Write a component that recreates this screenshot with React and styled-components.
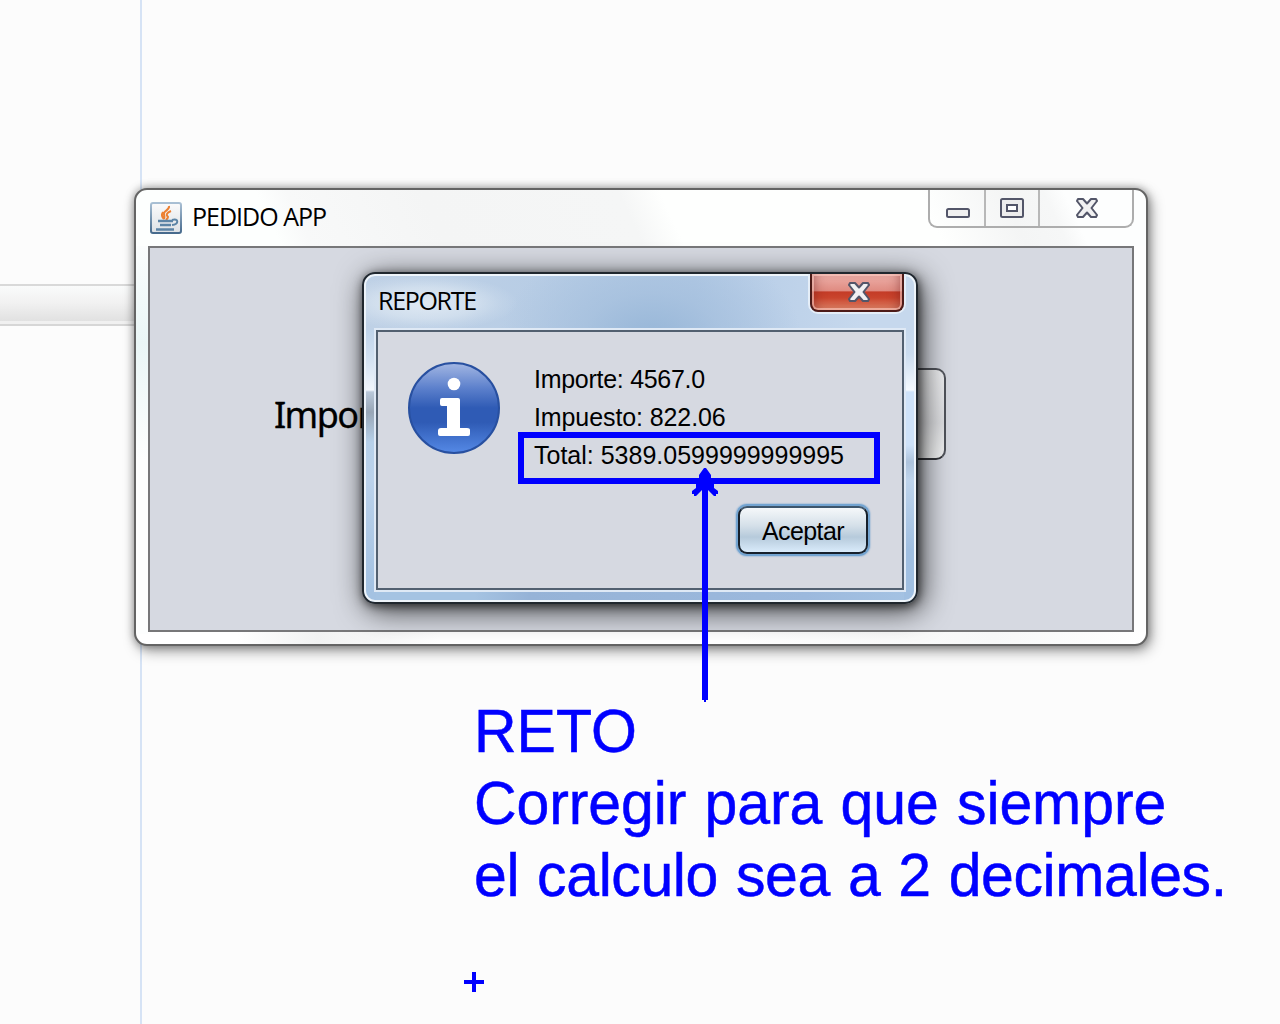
import React from "react";
import styled, { createGlobalStyle } from "styled-components";

const ink = "#0000ff";

const GlobalStyle = createGlobalStyle`
  * { box-sizing: border-box; }
  html, body { margin: 0; padding: 0; background: #fcfcfc; }
  body { overflow: hidden; font-family: "Liberation Sans", Arial, sans-serif; color: #000; }
  svg { display: block; }
`;

const Desktop = styled.main`
  position: relative;
  display: flex;
  width: 1280px;
  height: 1024px;
  overflow: hidden;
  background: #fcfcfc;
`;

const Gutter = styled.aside`
  width: 142px;
  padding-top: 284px;
  border-right: 2px solid #d6e3f5;
`;

const GutterBar = styled.div`
  height: 42px;
  border-top: 2px solid #d9d9d9;
  border-bottom: 2px solid #d6d6d6;
  background: linear-gradient(#fafbfb, #f1f1f1 45%, #e1e1e1 92%, #f0f0f0 93%);
`;

const AppWindow = styled.section`
  position: absolute;
  left: 134px;
  top: 188px;
  width: 1014px;
  height: 458px;
  padding: 0 12px 12px;
  border: 2px solid #646464;
  border-radius: 13px;
  background:
    linear-gradient(#fbfdfd, #eaf6f6 25%, #fdfefe 55%) left 0 top 56px / 12px 388px no-repeat,
    linear-gradient(90deg, #fff 10%, #f1f2f2 18%, #fff 30%, #fff 60%, #f7f8f8 85%, #fff) left 0 bottom 0 / 100% 12px no-repeat,
    linear-gradient(65deg, #fdfffe 14%, #f8f9f9 17%, #f4f5f5 30%, #f5f6f6 49%, #fefffe 53%, #fefffe 78%, #f4f5f5 86%, #f6f7f7 90%, #fdfefe 92%) left 0 top 0 / 100% 56px no-repeat,
    #fefefe;
  box-shadow: 0 0 8px rgba(0, 0, 0, 0.35), 3px 5px 14px rgba(0, 0, 0, 0.38);
`;

const DialogWindow = styled.section`
  position: absolute;
  left: 362px;
  top: 272px;
  width: 556px;
  height: 332px;
  padding: 0 12px 12px;
  border: 2px solid #20272e;
  border-radius: 13px;
  background:
    linear-gradient(#c0d4ea, #d2e1f1 28px, #f1f6fc 60px, #b9c8d9 62px, #98a6b6 82px, #b6d0e9 112px, #bbd2eb 150px, #a4c2e2 256px) left 0 top 56px / 12px 272px no-repeat,
    linear-gradient(#c5d7ec, #cbdcef 24px, #f4f9fe 60px, #cee2f9 62px, #cee2f9 115px, #adc3dc 132px, #bed4ec 150px, #a0bfe1 220px) right 0 top 56px / 12px 272px no-repeat,
    linear-gradient(90deg, #a5c3e2 20%, #96b3d7 30%, #9cb9dd 80%, #a5c3e3) left 0 bottom 0 / 100% 12px no-repeat,
    radial-gradient(ellipse 92px 28px at 62px 29px, rgba(235, 242, 248, 0.75), rgba(228, 237, 245, 0.5) 55%, rgba(228, 237, 245, 0.18) 80%, transparent) left 0 top 0 / 100% 56px no-repeat,
    radial-gradient(ellipse 150px 100px at 52% 64px, rgba(149, 181, 215, 0.95), rgba(160, 188, 219, 0.6) 45%, transparent) left 0 top 0 / 100% 56px no-repeat,
    linear-gradient(90deg, #bfd1e6, #b6cce5 40%, #b3cae5 60%, #c6d8ed 90%);
  box-shadow: inset 0 0 0 2px #eef4fa, 1px 2px 10px rgba(0, 0, 0, 0.6), 4px 6px 30px rgba(0, 0, 0, 0.75);
`;

const TitleBar = styled.header`
  display: flex;
  height: 56px;
  align-items: flex-start;
`;

const AppTitle = styled.h1`
  flex: 1;
  margin: 0;
  padding: 0 0 0 10px;
  font: 400 25px/52px "Open Sans", "Noto Sans", sans-serif;
  letter-spacing: ${(p) => p.$tracking}px;
`;

const DialogTitle = styled(AppTitle)`
  padding-left: 2px;
`;

const CupFrame = styled.div`
  margin: 12px 0 0 2px;
`;

const Controls = styled.div`
  display: flex;
  width: 206px;
  height: 38px;
  border: 2px solid #adadad;
  border-top: 0;
  border-radius: 0 0 9px 9px;
`;

const ControlButton = styled.button`
  width: ${(p) => p.$width}px;
  padding: ${(p) => p.$top}px 0 0 ${(p) => p.$left}px;
  border: 0;
  border-right: ${(p) => (p.$last ? "0" : "2px solid #b8b8b8")};
  background: transparent;
  display: flex;
  align-items: flex-start;
`;

const CloseButton = styled.button`
  display: flex;
  width: 94px;
  height: 38px;
  padding: 8px 0 0 36px;
  border: 2px solid #4d1b18;
  border-top: 0;
  border-radius: 0 0 8px 8px;
  background: linear-gradient(#eeb1ab, #df8a80 48%, #c43b27 49%, #c9442d 66%, #df8469);
  box-shadow: inset 0 0 0 2px rgba(255, 205, 195, 0.6), inset 9px 0 12px -7px rgba(100, 20, 20, 0.5),
    inset -9px 0 12px -7px rgba(100, 20, 20, 0.5), 0 0 0 2px #e5eef8;
  clip-path: inset(0 -2px -2px -2px);
`;

const ClientArea = styled.div`
  width: ${(p) => p.$width}px;
  height: ${(p) => p.$height}px;
  border: 2px solid ${(p) => p.$edge};
  background: #d6d9e1;
  box-shadow: ${(p) => (p.$halo ? "0 0 0 2px #dfe9f5" : "none")};
`;

const FormRow = styled.div`
  display: flex;
  justify-content: space-between;
  align-items: center;
  height: 212px;
  padding: 120px 186px 0 124px;
`;

const FieldLabel = styled.span`
  padding-top: 2px;
  font: 400 36px/92px "Noto Sans", sans-serif;
  letter-spacing: -1.6px;
  -webkit-text-stroke: 0.3px #000;
`;

const RearButton = styled.button`
  width: 120px;
  height: 92px;
  border: 2px solid #50535a;
  border-bottom-color: #33353a;
  border-radius: 10px;
  background: linear-gradient(#eeeff1, #dfe0e3 60%, #f4f5f5);
`;

const Message = styled.div`
  display: flex;
  gap: 34px;
  padding: 30px 0 0 30px;
  height: 172px;
`;

const Lines = styled.div`
  margin-top: -2px;
`;

const Line = styled.p`
  margin: 0;
  font-size: 25px;
  line-height: 38px;
  white-space: nowrap;
  letter-spacing: ${(p) => p.$tracking}px;
`;

const Actions = styled.div`
  display: flex;
  justify-content: flex-end;
  padding: 2px 34px 0 0;
`;

const AcceptButton = styled.button`
  width: 130px;
  height: 48px;
  padding: 2px 0 0;
  border: 2px solid #16202c;
  border-top-color: #3e566c;
  border-radius: 9px;
  background: linear-gradient(#f5f8fa, #d5e0e9 40%, #b6cadb 66%, #d9ebfb);
  box-shadow: 0 0 0 2px #73a4d1, 0 0 1px 3px rgba(115, 164, 209, 0.35);
  font: 400 25px/40px "Liberation Sans", Arial, sans-serif;
  letter-spacing: -0.6px;
`;

const Highlight = styled.div`
  position: absolute;
  left: 518px;
  top: 432px;
  width: 362px;
  height: 52px;
  border: 6px solid ${ink};
`;

const ArrowMark = styled.svg`
  position: absolute;
  left: 690px;
  top: 468px;
`;

const CrossMark = styled.svg`
  position: absolute;
  left: 464px;
  top: 972px;
`;

const Note = styled.div`
  position: absolute;
  left: 474px;
  top: 695px;
  color: ${ink};
  font-size: 59px;
  line-height: 70px;
  -webkit-text-stroke: 0.5px ${ink};
  transform: scaleY(1.03);
  transform-origin: 0 0;
`;

const NoteLine = styled.p`
  margin: 0;
  white-space: nowrap;
  letter-spacing: ${(p) => p.$tracking || 0}px;
  word-spacing: ${(p) => p.$gap || 0}px;
`;

const JavaCup = () => (
  <svg width="32" height="32" viewBox="0 0 32 32">
    <defs>
      <linearGradient id="cupEdge" x2="0" y2="1">
        <stop stopColor="#a9c0d4" />
        <stop offset="1" stopColor="#466a8c" />
      </linearGradient>
      <linearGradient id="cupFill" x2="0" y2="1">
        <stop stopColor="#fbfbfb" />
        <stop offset="1" stopColor="#dde1e5" />
      </linearGradient>
    </defs>
    <rect x="1" y="1" width="30" height="30" rx="2" fill="url(#cupFill)" stroke="url(#cupEdge)" strokeWidth="2" />
    <path d="M19 4c1 4-6 5-5 8 0 1 1 2 0 5M21 9c-5 2-5 4-3 6 0 1-1 2-2 3M13 10c-2 3-1 5 1 7" fill="none" stroke="#ec8032" strokeWidth="2" />
    <path d="M8 19h15M10 23h11M6 27.500h18" fill="none" stroke="#5c84a6" strokeWidth="2.300" />
    <path d="M22 18c7-2 7 4 0 5" fill="none" stroke="#5c84a6" strokeWidth="2" />
  </svg>
);

const MinimizeGlyph = () => (
  <svg width="24" height="10" viewBox="0 0 24 10">
    <rect x="1" y="1" width="22" height="8" rx="1.5" fill="#f0f0f0" stroke="#535669" strokeWidth="2" />
  </svg>
);

const MaximizeGlyph = () => (
  <svg width="24" height="20" viewBox="0 0 24 20">
    <rect x="1" y="1" width="22" height="18" rx="1.5" fill="#ededed" stroke="#535669" strokeWidth="2" />
    <rect x="7" y="7" width="10" height="6" fill="#fff" stroke="#535669" strokeWidth="2" />
  </svg>
);

const CloseGlyph = () => (
  <svg width="22" height="20" viewBox="0 0 22 20">
    <path
      d="M2 1H7L11 5.5L15 1H20L21 3L15.5 10L21 17L20 19H15L11 14.5L7 19H2L1 17L6.500 10L1 3Z"
      fill="#f1f1f2"
      stroke="#535669"
      strokeWidth="2"
      strokeLinejoin="round"
    />
  </svg>
);

const InfoIcon = () => (
  <svg width="92" height="92" viewBox="0 0 92 92">
    <defs>
      <linearGradient id="infoFill" x2="0" y2="1">
        <stop stopColor="#a3b7e3" />
        <stop offset="0.28" stopColor="#5c80cc" />
        <stop offset="0.5" stopColor="#2f5bb5" />
        <stop offset="0.66" stopColor="#2f5bb5" />
        <stop offset="1" stopColor="#5589e6" />
      </linearGradient>
    </defs>
    <circle cx="46" cy="46" r="45" fill="url(#infoFill)" stroke="#2850a0" strokeWidth="2" />
    <circle cx="46" cy="22" r="6.300" fill="#fff" />
    <path
      d="M34 36H50Q52 36 52 38V66H59Q62 66 62 68V72Q62 74 60 74H32Q30 74 30 72V69Q30 66 33 66H39V44H34Q32 44 32 42V38Q32 36 34 36Z"
      fill="#fff"
    />
  </svg>
);

export default function App() {
  return (
    <Desktop>
      <GlobalStyle />
      <Gutter>
        <GutterBar />
      </Gutter>

      <AppWindow>
        <TitleBar>
          <CupFrame>
            <JavaCup />
          </CupFrame>
          <AppTitle $tracking={-1}>PEDIDO APP</AppTitle>
          <Controls>
            <ControlButton $width={56} $left={16} $top={18} aria-label="Minimizar">
              <MinimizeGlyph />
            </ControlButton>
            <ControlButton $width={54} $left={14} $top={8} aria-label="Maximizar">
              <MaximizeGlyph />
            </ControlButton>
            <ControlButton $width={92} $left={36} $top={8} $last aria-label="Cerrar">
              <CloseGlyph />
            </ControlButton>
          </Controls>
        </TitleBar>
        <ClientArea $width={986} $height={386} $edge="#777779">
          <FormRow>
            <FieldLabel>Impor</FieldLabel>
            <RearButton aria-label="Procesar" />
          </FormRow>
        </ClientArea>
      </AppWindow>

      <DialogWindow>
        <TitleBar>
          <DialogTitle $tracking={-1.3}>REPORTE</DialogTitle>
          <CloseButton aria-label="Cerrar">
            <CloseGlyph />
          </CloseButton>
        </TitleBar>
        <ClientArea $width={528} $height={260} $edge="#526070" $halo>
          <Message>
            <InfoIcon />
            <Lines>
              <Line $tracking={-0.28}>Importe: 4567.0</Line>
              <Line $tracking={-0.1}>Impuesto: 822.06</Line>
              <Line $tracking={0}>Total: 5389.0599999999995</Line>
            </Lines>
          </Message>
          <Actions>
            <AcceptButton>Aceptar</AcceptButton>
          </Actions>
        </ClientArea>
      </DialogWindow>

      <Highlight />
      <ArrowMark width="30" height="234" viewBox="0 0 30 234">
        <path
          d="M14 0H16L21 7V11L24 16V20L28 23V26H26V28H24L18 22V232H16V234H14V232H12V22L6 28H4V26H2V23L6 20V16L9 11V7Z"
          fill={ink}
        />
      </ArrowMark>
      <Note>
        <NoteLine>RETO</NoteLine>
        <NoteLine $gap={2} $tracking={-0.1}>Corregir para que siempre</NoteLine>
        <NoteLine $gap={2} $tracking={-0.4}>el calculo sea a 2 decimales.</NoteLine>
      </Note>
      <CrossMark width="20" height="20" viewBox="0 0 20 20">
        <path d="M10 0V20M0 10H20" stroke={ink} strokeWidth="4" />
      </CrossMark>
    </Desktop>
  );
}
